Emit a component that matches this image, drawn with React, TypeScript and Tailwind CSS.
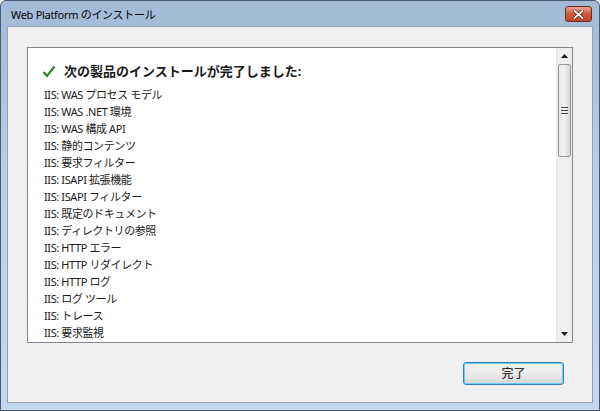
import React from 'react';

const items = [
  'IIS: WAS プロセス モデル',
  'IIS: WAS .NET 環境',
  'IIS: WAS 構成 API',
  'IIS: 静的コンテンツ',
  'IIS: 要求フィルター',
  'IIS: ISAPI 拡張機能',
  'IIS: ISAPI フィルター',
  'IIS: 既定のドキュメント',
  'IIS: ディレクトリの参照',
  'IIS: HTTP エラー',
  'IIS: HTTP リダイレクト',
  'IIS: HTTP ログ',
  'IIS: ログ ツール',
  'IIS: トレース',
  'IIS: 要求監視',
];

const font = { fontFamily: '"Noto Sans", "Noto Sans CJK JP", sans-serif' };

const App: React.FC = () => {
  return (
    <div className="w-[600px] h-[411px] bg-white" style={font}>
      <div className="w-full h-full flex flex-col border border-[#4a5a6e] rounded-t-[6px] bg-gradient-to-b from-[#a3bad7] via-[#bcd2ec] to-[#c3d8ef]">
        {/* Title bar */}
        <div className="h-[25px] flex items-center justify-between pl-[10px] pr-[7px] shrink-0">
          <span className="text-[11px] tracking-[-0.3px] text-black leading-none mt-[2px]">Web Platform のインストール</span>
          <button className="w-[27px] h-[16px] mt-[1px] rounded-[3px] border border-[#6b2a1e] bg-gradient-to-b from-[#e8a593] via-[#d2573c] to-[#c4442a] flex items-center justify-center">
            <svg width="11" height="9" viewBox="0 0 11 9">
              <path d="M1.5 1 L9.5 8 M9.5 1 L1.5 8" stroke="#5a1a10" strokeWidth="3.2" strokeLinecap="square" />
              <path d="M1.5 1 L9.5 8 M9.5 1 L1.5 8" stroke="#ffffff" strokeWidth="1.8" strokeLinecap="square" />
            </svg>
          </button>
        </div>

        {/* Client area */}
        <div className="flex-1 mx-[6px] mb-[7px] border border-[#8ea5c0] bg-[#f0f0f0] flex flex-col">
          <div className="mt-[20px] mx-[19px] h-[296px] border border-[#828790] bg-white flex">
            <div className="flex-1 pl-[14px] pt-[12px] overflow-hidden">
              <div className="flex items-center gap-[8px] h-[22px]">
                <svg width="14" height="13" viewBox="0 0 14 13" className="shrink-0">
                  <path d="M1.5 7 L5 11 L12.5 1.5" fill="none" stroke="#2f8a2f" strokeWidth="2.2" />
                </svg>
                <span className="text-[13px] font-bold text-[#1a1a1a] leading-none">次の製品のインストールが完了しました:</span>
              </div>
              <ul className="mt-[4px] pl-[2px]">
                {items.map((t) => (
                  <li key={t} className="h-[17px] text-[11px] tracking-[-0.4px] leading-[17px] text-[#1a1a1a] whitespace-nowrap">
                    {t}
                  </li>
                ))}
              </ul>
            </div>
            {/* Scrollbar */}
            <div className="w-[16px] bg-[#f0f0f0] flex flex-col border-l border-[#e8e8e8]">
              <div className="h-[16px] flex items-center justify-center">
                <svg width="7" height="4" viewBox="0 0 7 4"><path d="M0 4 L3.5 0 L7 4 Z" fill="#1a1a1a" /></svg>
              </div>
              <div className="h-[93px] mx-[1px] rounded-[2px] border border-[#979797] bg-gradient-to-r from-[#e9e9e9] via-[#f2f2f2] to-[#d6d6d6] flex flex-col items-center justify-center gap-[2px]">
                <div className="w-[7px] h-[1px] bg-[#444]" />
                <div className="w-[7px] h-[1px] bg-[#444]" />
                <div className="w-[7px] h-[1px] bg-[#444]" />
              </div>
              <div className="flex-1" />
              <div className="h-[16px] flex items-center justify-center">
                <svg width="7" height="4" viewBox="0 0 7 4"><path d="M0 0 L7 0 L3.5 4 Z" fill="#1a1a1a" /></svg>
              </div>
            </div>
          </div>

          <div className="flex justify-end mt-[19px] mr-[28px]">
            <button className="w-[101px] h-[23px] rounded-[3px] border border-[#3c7fb1] bg-gradient-to-b from-[#f2f2f2] via-[#ebebeb] to-[#d6d6d6] shadow-[inset_0_0_0_1px_#5fd2fa] text-[12px] text-black leading-none">
              完了
            </button>
          </div>
        </div>
      </div>
    </div>
  );
};

export default App;
